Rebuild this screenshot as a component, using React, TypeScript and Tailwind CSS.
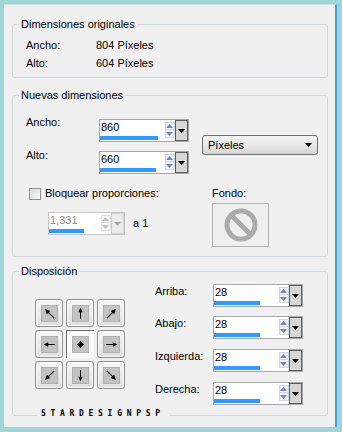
import React from 'react';

const FONT = "font-['Liberation_Sans',Arial,sans-serif]";

// small arrow for the position pad, drawn pointing up and rotated
function PadArrow({ angle }: { angle: number }) {
  const diag = angle % 90 !== 0;
  return (
    <svg width="17" height="17" viewBox="0 0 17 17">
      <g transform={`rotate(${angle} 8.5 8.5)`}>
        <line x1="8.5" y1={diag ? 16 : 14.5} x2="8.5" y2="5" stroke="#000" strokeWidth="1.1" />
        <polygon points={diag ? '8.5,1 5.8,7 11.2,7' : '8.5,2 6,7 11,7'} fill="#000" />
      </g>
    </svg>
  );
}

function PadButton({ angle, center }: { angle?: number; center?: boolean }) {
  if (center) {
    return (
      <div className="flex h-[28px] w-[28px] items-center justify-center border-t border-l border-[#6b6b6b] border-r-[#ffffff] border-b-[#ffffff] bg-[#fbfbfb]">
        <div className="flex h-[17px] w-[17px] items-center justify-center border border-[#b4b4b4] bg-[#c4c4c4]">
          <div className="h-[5px] w-[5px] rotate-45 bg-black" />
        </div>
      </div>
    );
  }
  return (
    <div className="flex h-[28px] w-[28px] items-center justify-center rounded-[3px] border border-[#8e8e8e] bg-gradient-to-b from-[#f6f6f6] to-[#e1e1e1] shadow-[inset_0_0_0_1px_#fcfcfc]">
      <div className="flex h-[17px] w-[17px] items-center justify-center border border-[#b0b0b0] bg-[#c3c3c3]">
        <PadArrow angle={angle ?? 0} />
      </div>
    </div>
  );
}

function Tri({ down, color }: { down?: boolean; color: string }) {
  return (
    <svg width="7" height="4" viewBox="0 0 7 4">
      <polygon points={down ? '0,0 7,0 3.5,4' : '3.5,0 7,4 0,4'} fill={color} />
    </svg>
  );
}

interface SpinBoxProps {
  value: string;
  bar: number;
  width: string;
  disabled?: boolean;
}

function SpinBox({ value, bar, width, disabled }: SpinBoxProps) {
  return (
    <div className={`flex h-[23px] ${width} border bg-white ${disabled ? 'border-[#c6c6c6]' : 'border-[#a7a7a7]'}`}>
      <div className="flex min-w-0 flex-1 flex-col justify-between">
        <span className={`pl-[1px] pt-[1px] text-[11px] leading-[13px] ${disabled ? 'text-[#8c8c8c]' : 'text-black'}`}>{value}</span>
        <div className="mb-[1px] h-[4px] bg-[#3399ff]" style={{ width: bar }} />
      </div>
      <div className="flex w-[11px] flex-col items-center pt-[2px]">
        <div className={`flex h-[8px] w-[10px] items-center justify-center border ${disabled ? 'border-[#e0e0e0] bg-[#f6f6f6]' : 'border-[#d2d6de] bg-[#eef1f8]'}`}>
          <Tri color={disabled ? '#c2c2c2' : '#7886bb'} />
        </div>
        <div className={`flex h-[8px] w-[10px] items-center justify-center border border-t-0 ${disabled ? 'border-[#e0e0e0] bg-[#f6f6f6]' : 'border-[#d2d6de] bg-[#eef1f8]'}`}>
          <Tri down color={disabled ? '#c2c2c2' : '#7886bb'} />
        </div>
      </div>
      <div className={`flex h-[21px] w-[13px] items-center justify-center border ${disabled ? 'border-[#d0d0d0] bg-[#ececec]' : 'border-[#5e5e5e] bg-[#d6d6d6]'}`}>
        <Tri down color={disabled ? '#a8a8a8' : '#000'} />
      </div>
    </div>
  );
}

function GroupLegend({ children }: { children: React.ReactNode }) {
  return <legend className="ml-[6px] px-[2px] text-[11px] leading-[13px] text-black">{children}</legend>;
}

const margins = [
  { label: 'Arriba:', cls: 'mt-0' },
  { label: 'Abajo:', cls: 'mt-[9px]' },
  { label: 'Izquierda:', cls: 'mt-[10px]' },
  { label: 'Derecha:', cls: 'mt-[10px]' },
];

export default function App() {
  return (
    <div className={`relative h-[432px] w-[342px] bg-[#a2d5d5] pt-[4px] pr-[5px] pb-[5px] pl-[4px] ${FONT} text-[11px] text-black`}>
      <div className="h-full border-t border-r-2 border-t-[#c8e6e6] border-r-[#3ea2ea] bg-[#f0f0f0] pt-[13px] pl-[8px]">
        {/* Dimensiones originales */}
        <fieldset className="w-[316px] rounded-[3px] border border-[#d3d8dc]">
          <GroupLegend>Dimensiones originales</GroupLegend>
          <div className="pt-[5px] pb-[5px] pl-[13px]">
            <div className="flex h-[18px] items-center">
              <span className="w-[70px]">Ancho:</span>
              <span>804 Píxeles</span>
            </div>
            <div className="flex h-[18px] items-center">
              <span className="w-[70px]">Alto:</span>
              <span>604 Píxeles</span>
            </div>
          </div>
        </fieldset>

        {/* Nuevas dimensiones */}
        <fieldset className="mt-[11px] w-[316px] rounded-[3px] border border-[#d3d8dc]">
          <GroupLegend>Nuevas dimensiones</GroupLegend>
          <div className="pt-[14px] pb-[9px] pl-[13px]">
            <div className="flex items-center">
              <div className="flex flex-col">
                <div className="flex items-start">
                  <span className="w-[73px] leading-[13px]">Ancho:</span>
                  <div className="mt-[3px]">
                    <SpinBox value="860" bar={58} width="w-[90px]" />
                  </div>
                </div>
                <div className="mt-[7px] flex items-start">
                  <span className="w-[73px] leading-[13px]">Alto:</span>
                  <div className="mt-[2px]">
                    <SpinBox value="660" bar={56} width="w-[90px]" />
                  </div>
                </div>
              </div>
              <div className="ml-[13px] flex h-[20px] w-[116px] items-center justify-between rounded-[3px] border border-[#707070] bg-gradient-to-b from-[#f3f3f3] via-[#e9e9e9] to-[#d5d5d5] pr-[5px] pl-[5px]">
                <span className="leading-[13px]">Píxeles</span>
                <Tri down color="#000" />
              </div>
            </div>

            <div className="mt-[13px] flex">
              <div className="flex w-[186px] flex-col">
                <div className="flex h-[13px] items-center pl-[3px]">
                  <div className="h-[12px] w-[12px] border border-[#8f8f8f] bg-gradient-to-br from-[#dcdcdc] to-[#f7f7f7]" />
                  <span className="ml-[4px] leading-[13px]">Bloquear proporciones:</span>
                </div>
                <div className="mt-[12px] flex items-center pl-[22px]">
                  <SpinBox value="1,331" bar={35} width="w-[77px]" disabled />
                  <span className="ml-[8px]">a 1</span>
                </div>
              </div>
              <div className="flex flex-col">
                <span className="leading-[13px]">Fondo:</span>
                <div className="mt-[3px] flex h-[44px] w-[57px] items-center justify-center border border-[#b2b2b2] bg-[#efefef]">
                  <svg width="36" height="36" viewBox="0 0 36 36">
                    <circle cx="18" cy="18" r="14" fill="none" stroke="#acacac" strokeWidth="5" />
                    <line x1="8.5" y1="8.5" x2="27.5" y2="27.5" stroke="#acacac" strokeWidth="5" />
                  </svg>
                </div>
              </div>
            </div>
          </div>
        </fieldset>

        {/* Disposición */}
        <fieldset className="mt-[8px] w-[316px] rounded-[3px] border border-[#d3d8dc]">
          <GroupLegend>Disposición</GroupLegend>
          <div className="flex pb-[10px] pl-[22px]">
            <div className="mt-[21px] grid h-[90px] w-[90px] grid-cols-3 gap-[3px]">
              <PadButton angle={-45} />
              <PadButton angle={0} />
              <PadButton angle={45} />
              <PadButton angle={-90} />
              <PadButton center />
              <PadButton angle={90} />
              <PadButton angle={-135} />
              <PadButton angle={180} />
              <PadButton angle={135} />
            </div>
            <div className="ml-[30px] flex flex-col pt-[6px]">
              {margins.map((m) => (
                <div key={m.label} className={`flex items-start ${m.cls}`}>
                  <span className="mt-[1px] w-[58px] leading-[13px]">{m.label}</span>
                  <SpinBox value="28" bar={46} width="w-[90px]" />
                </div>
              ))}
            </div>
          </div>
        </fieldset>
      </div>

      {/* watermark over the bottom border */}
      <div className="absolute top-[410px] left-[37px] flex h-[8px] items-center bg-[#f0f0f0] px-[4px] font-['DejaVu_Sans_Mono',monospace] text-[8px] leading-[8px] font-bold tracking-[4.7px] text-black">
        STARDESIGNPSP
      </div>
    </div>
  );
}
